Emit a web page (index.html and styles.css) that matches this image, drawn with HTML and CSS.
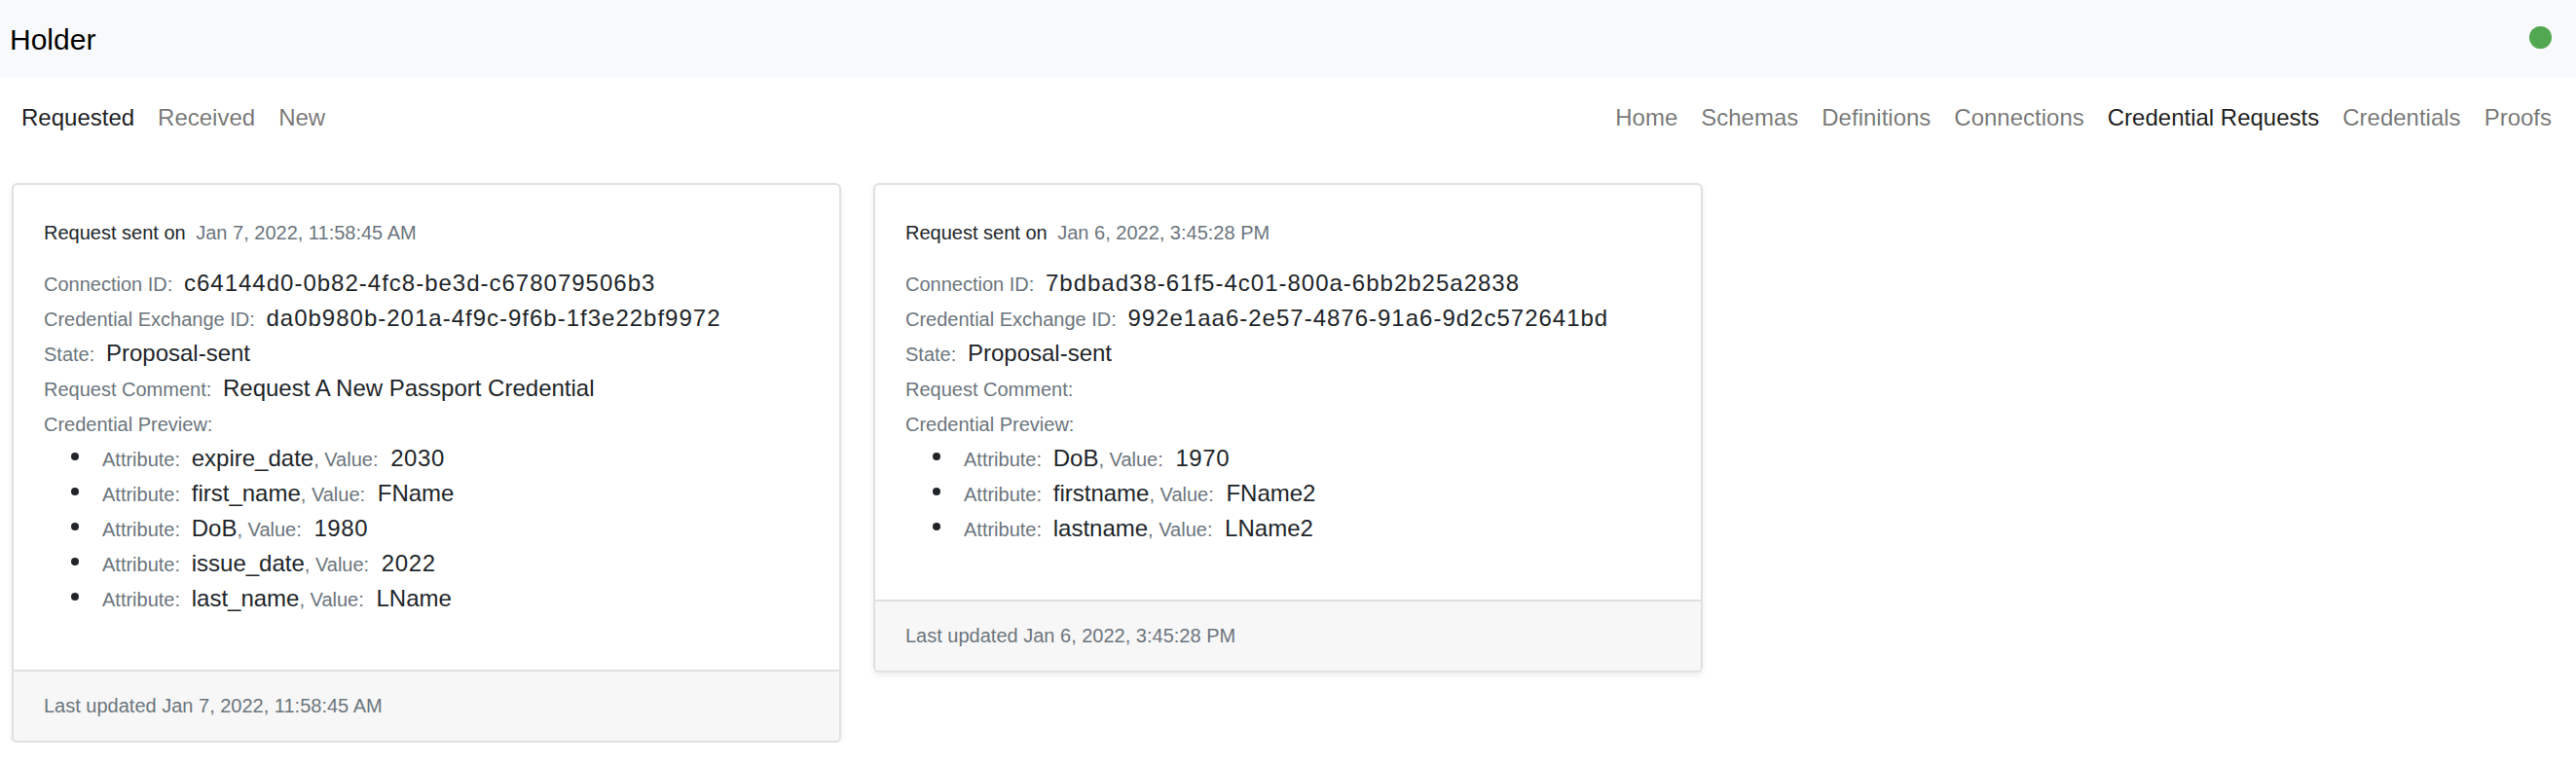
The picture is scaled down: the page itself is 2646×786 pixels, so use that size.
FILE: index.html
```html
<!DOCTYPE html>
<html lang="en">
<head>
<meta charset="utf-8">
<title>Holder</title>
<link rel="stylesheet" href="styles.css">
</head>
<body>
<header class="topbar">
  <span class="brand">Holder</span>
  <span class="status-dot"></span>
</header>
<nav class="tabs">
  <div class="tab-group">
    <a class="tab active">Requested</a>
    <a class="tab">Received</a>
    <a class="tab">New</a>
  </div>
  <div class="tab-group">
    <a class="tab">Home</a>
    <a class="tab">Schemas</a>
    <a class="tab">Definitions</a>
    <a class="tab">Connections</a>
    <a class="tab active">Credential Requests</a>
    <a class="tab">Credentials</a>
    <a class="tab">Proofs</a>
  </div>
</nav>
<main class="cards">
  <section class="card">
    <div class="card-body">
      <div class="card-title">Request sent on <span class="muted">Jan 7, 2022, 11:58:45 AM</span></div>
      <div class="row"><span class="label">Connection ID:</span> <span class="id">c64144d0-0b82-4fc8-be3d-c678079506b3</span></div>
      <div class="row"><span class="label">Credential Exchange ID:</span> <span class="id">da0b980b-201a-4f9c-9f6b-1f3e22bf9972</span></div>
      <div class="row"><span class="label">State:</span> Proposal-sent</div>
      <div class="row"><span class="label">Request Comment:</span> Request A New Passport Credential</div>
      <div class="row"><span class="label">Credential Preview:</span></div>
      <ul class="attrs">
        <li><span class="label">Attribute:</span> expire_date<span class="label sep">, Value:</span> <span class="num">2030</span></li>
        <li><span class="label">Attribute:</span> first_name<span class="label sep">, Value:</span> FName</li>
        <li><span class="label">Attribute:</span> DoB<span class="label sep">, Value:</span> <span class="num">1980</span></li>
        <li><span class="label">Attribute:</span> issue_date<span class="label sep">, Value:</span> <span class="num">2022</span></li>
        <li><span class="label">Attribute:</span> last_name<span class="label sep">, Value:</span> LName</li>
      </ul>
    </div>
    <div class="card-footer">Last updated Jan 7, 2022, 11:58:45 AM</div>
  </section>
  <section class="card">
    <div class="card-body">
      <div class="card-title">Request sent on <span class="muted">Jan 6, 2022, 3:45:28 PM</span></div>
      <div class="row"><span class="label">Connection ID:</span> <span class="id">7bdbad38-61f5-4c01-800a-6bb2b25a2838</span></div>
      <div class="row"><span class="label">Credential Exchange ID:</span> <span class="id">992e1aa6-2e57-4876-91a6-9d2c572641bd</span></div>
      <div class="row"><span class="label">State:</span> Proposal-sent</div>
      <div class="row"><span class="label">Request Comment:</span></div>
      <div class="row"><span class="label">Credential Preview:</span></div>
      <ul class="attrs">
        <li><span class="label">Attribute:</span> DoB<span class="label sep">, Value:</span> <span class="num">1970</span></li>
        <li><span class="label">Attribute:</span> firstname<span class="label sep">, Value:</span> FName2</li>
        <li><span class="label">Attribute:</span> lastname<span class="label sep">, Value:</span> LName2</li>
      </ul>
    </div>
    <div class="card-footer">Last updated Jan 6, 2022, 3:45:28 PM</div>
  </section>
</main>
</body>
</html>
```
FILE: styles.css
```css
* { box-sizing: border-box; }
html, body { margin: 0; padding: 0; background: #fff; }
body {
  font-family: "Liberation Sans", Arial, Helvetica, sans-serif;
  color: #212529;
  font-size: 24px;
  line-height: 1.5;
}
.topbar {
  height: 80px;
  background: #f8f9fa;
  display: flex;
  align-items: center;
  justify-content: space-between;
  padding: 0 25px 0 10px;
}
.brand {
  font-size: 30px;
  line-height: 45px;
  color: #000;
}
.status-dot {
  width: 23px;
  height: 23px;
  border-radius: 50%;
  background: #51a850;
  margin-bottom: 4px;
}
.tabs {
  display: flex;
  justify-content: space-between;
  padding: 11px 13px 0 10px;
}
.tab-group { display: flex; }
.tab {
  display: block;
  padding: 12px;
  font-size: 24px;
  line-height: 36px;
  color: rgba(0, 0, 0, 0.55);
  text-decoration: none;
}
.tab.active { color: rgba(0, 0, 0, 0.9); }
.cards {
  display: flex;
  align-items: flex-start;
  gap: 33px;
  padding: 0 12px;
  margin-top: 37px;
}
.card {
  width: 852px;
  border: 2px solid #e0e0e0;
  border-radius: 6px;
  background: #fff;
  box-shadow: 0 3px 6px rgba(0, 0, 0, 0.07);
  overflow: hidden;
}
.card-body {
  padding: 35px 31px 55px;
}
.card-title {
  font-size: 20px;
  line-height: 29.25px;
  margin-bottom: 18.5px;
  color: #212529;
}
.muted { color: #6c757d; margin-left: 5px; }
.row { line-height: 36px; }
.label {
  font-size: 20px;
  line-height: 1;
  color: #6c757d;
  margin-right: 5px;
}
.label.sep { margin-right: 6px; }
.id { letter-spacing: 1px; }
.num { letter-spacing: 0.6px; }
.attrs {
  list-style: none;
  margin: 0;
  padding: 0;
}
.attrs li { line-height: 36px; }
.attrs li::before {
  content: "";
  display: inline-block;
  width: 8px;
  height: 8px;
  border-radius: 50%;
  background: #212529;
  margin: 0 24px 0 28px;
  vertical-align: 6px;
}
.card-footer {
  background: #f7f7f7;
  border-top: 2px solid #e0e0e0;
  padding: 21px 31px;
  font-size: 20px;
  line-height: 29.25px;
  color: #6c757d;
}
```
